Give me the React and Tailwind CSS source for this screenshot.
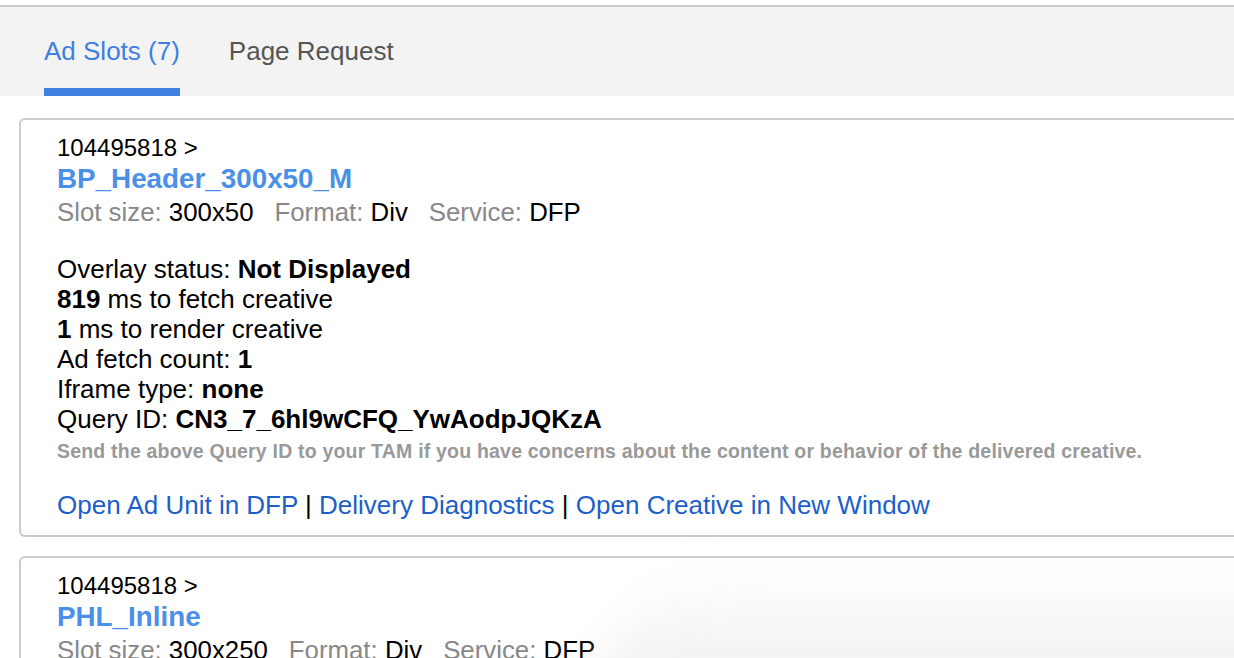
import React from 'react';

const SlotCard = ({ network, name, size, children }) => (
    <div className="border-2 border-r-0 border-[#cccccc] rounded-l-[6px] pl-[36px] pt-[14px] pb-[15px] mr-[-40px]">
        <p className="text-[24px] leading-[28px] text-black">{network} &gt;</p>
        <p className="text-[27.8px] leading-[34px] font-bold text-[#4a90e8]">{name}</p>
        <p className="text-[25.8px] leading-[32px] text-black">
            <span className="text-[#888888]">Slot size: </span>{size}
            <span className="text-[#888888] ml-[21px]">Format: </span>Div
            <span className="text-[#888888] ml-[21px]">Service: </span>DFP
        </p>
        {children}
    </div>
);

const App = () => {
    return (
        <div className="relative w-full h-[658px] overflow-hidden bg-white font-['Liberation_Sans',Arial,sans-serif]">
            <div className="pt-[5px]">
                <div className="border-t-2 border-[#cccccc] bg-[#f3f3f3] h-[91px] flex pl-[44px] gap-[49px]">
                    <div className="flex flex-col h-full">
                        <span className="pt-[29px] text-[26px] leading-[30px] text-[#3f7fe0]">Ad Slots (7)</span>
                        <div className="mt-auto h-[8px] bg-[#3f7fe0]"></div>
                    </div>
                    <div className="flex flex-col h-full">
                        <span className="pt-[29px] text-[26px] leading-[30px] text-[#555555]">Page Request</span>
                    </div>
                </div>
            </div>

            <div className="pl-[19px] pt-[22px] flex flex-col gap-[19px]">
                <SlotCard network="104495818" name="BP_Header_300x50_M" size="300x50">
                    <div className="mt-[26px] text-[26px] leading-[30px] text-black">
                        <p>Overlay status: <b>Not Displayed</b></p>
                        <p><b>819</b> ms to fetch creative</p>
                        <p><b>1</b> ms to render creative</p>
                        <p>Ad fetch count: <b>1</b></p>
                        <p>Iframe type: <b>none</b></p>
                        <p>Query ID: <b>CN3_7_6hl9wCFQ_YwAodpJQKzA</b></p>
                    </div>
                    <p className="mt-[7px] text-[19.5px] leading-[20px] tracking-[0.2px] font-bold text-[#999999]">
                        Send the above Query ID to your TAM if you have concerns about the content or behavior of the delivered creative.
                    </p>
                    <p className="mt-[29px] text-[26px] leading-[30px] text-black">
                        <span className="text-[#1c5fc9]">Open Ad Unit in DFP</span> | <span className="text-[#1c5fc9]">Delivery Diagnostics</span> | <span className="text-[#1c5fc9]">Open Creative in New Window</span>
                    </p>
                </SlotCard>
                <SlotCard network="104495818" name="PHL_Inline" size="300x250" />
            </div>

            <div className="pointer-events-none absolute right-[-80px] bottom-[-60px] w-[720px] h-[150px] rounded-tl-[200px] bg-gradient-to-b from-transparent to-[#e6e6e6] blur-xl opacity-80"></div>
        </div>
    );
};

export default App;
